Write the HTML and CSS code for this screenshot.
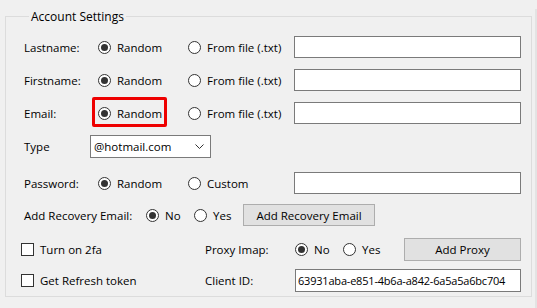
FILE: index.html
```html
<!DOCTYPE html>
<html>
<head>
<meta charset="utf-8">
<link rel="stylesheet" href="styles.css">
</head>
<body>
<div class="window">
  <fieldset class="group">
    <legend class="group-title">Account Settings</legend>

    <div class="row row-1">
      <span class="label w-label">Lastname:</span>
      <span class="opt w-opt-a"><i class="radio on"></i>Random</span>
      <span class="opt w-opt-b"><i class="radio"></i>From file (.txt)</span>
      <span class="textbox w-text"></span>
    </div>

    <div class="row row-2">
      <span class="label w-label">Firstname:</span>
      <span class="opt w-opt-a"><i class="radio on"></i>Random</span>
      <span class="opt w-opt-b"><i class="radio"></i>From file (.txt)</span>
      <span class="textbox w-text"></span>
    </div>

    <div class="row row-3">
      <span class="label w-label">Email:</span>
      <span class="opt w-opt-a highlighted"><i class="radio on"></i>Random<span class="highlight"></span></span>
      <span class="opt w-opt-b"><i class="radio"></i>From file (.txt)</span>
      <span class="textbox w-text"></span>
    </div>

    <div class="row row-4">
      <span class="label w-type">Type</span>
      <span class="combo">@hotmail.com
        <svg class="chevron" width="9" height="5" viewBox="0 0 9 5"><path d="M0.5 0.5 L4.5 4.5 L8.5 0.5" fill="none" stroke="#333" stroke-width="1"/></svg>
      </span>
    </div>

    <div class="row row-5">
      <span class="label w-label">Password:</span>
      <span class="opt w-opt-a"><i class="radio on"></i>Random</span>
      <span class="opt w-opt-b"><i class="radio"></i>Custom</span>
      <span class="textbox w-text"></span>
    </div>

    <div class="row row-6">
      <span class="label w-recovery">Add Recovery Email:</span>
      <span class="opt w-no"><i class="radio on"></i>No</span>
      <span class="opt w-yes"><i class="radio"></i>Yes</span>
      <span class="button w-recovery-btn">Add Recovery Email</span>
    </div>

    <div class="row row-7">
      <span class="opt w-check"><i class="checkbox"></i>Turn on 2fa</span>
      <span class="label w-mid">Proxy Imap:</span>
      <span class="opt w-no2"><i class="radio on"></i>No</span>
      <span class="opt w-yes2"><i class="radio"></i>Yes</span>
      <span class="button w-proxy-btn">Add Proxy</span>
    </div>

    <div class="row row-8">
      <span class="opt w-check"><i class="checkbox"></i>Get Refresh token</span>
      <span class="label w-mid">Client ID:</span>
      <span class="textbox w-client"><span class="client-id">63931aba-e851-4b6a-a842-6a5a5a6bc704</span></span>
    </div>
  </fieldset>
</div>
</body>
</html>
```

FILE: styles.css
```css
html, body {
  margin: 0;
  padding: 0;
  background: #f0f0f0;
}

body {
  font-family: "Open Sans", "Noto Sans", "DejaVu Sans", sans-serif;
  font-size: 11.5px;
  color: #000;
  width: 537px;
  height: 308px;
  overflow: hidden;
}

.window {
  width: 535px;
  height: 308px;
  border-right: 2px solid #e3e3e3;
}

.group {
  box-sizing: border-box;
  width: 527px;
  margin: 9px 0 0 5px;
  padding: 0 10px 3px 18px;
  border: 1px solid #dcdcdc;
  height: 288px;
}

.group-title {
  padding: 0 2px;
  margin-left: 5px;
  line-height: 15px;
  font-size: 12px;
}

.row {
  display: flex;
  align-items: center;
  height: 22px;
}

.row-1 { margin-top: 12px; }
.row-2 { margin-top: 11px; }
.row-3 { margin-top: 11px; }
.row-4 { margin-top: 11px; }
.row-5 { margin-top: 15px; }
.row-6 { margin-top: 10px; }
.row-7 { margin-top: 12px; height: 23px; }
.row-8 { margin-top: 8px; height: 23px; }

.label, .opt {
  flex: none;
  white-space: nowrap;
  display: flex;
  align-items: center;
}

.w-label { width: 74px; }
.w-type { width: 66px; }
.w-recovery { width: 122px; }
.w-opt-a { width: 90px; }
.w-opt-b { width: 106px; }
.w-no { width: 48px; }
.w-yes { width: 49px; }
.w-check { width: 184px; margin-left: -3px; }
.w-mid { width: 90px; }
.w-no2 { width: 48px; }
.w-yes2 { width: 61px; }

.radio {
  box-sizing: border-box;
  width: 13px;
  height: 13px;
  border: 1px solid #333;
  border-radius: 50%;
  background: #fff;
  margin-right: 6px;
  display: flex;
  align-items: center;
  justify-content: center;
  flex: none;
}

.radio.on::after {
  content: "";
  width: 7px;
  height: 7px;
  border-radius: 50%;
  background: #333;
}

.checkbox {
  box-sizing: border-box;
  width: 13px;
  height: 13px;
  border: 1px solid #333;
  background: #fff;
  margin-right: 6px;
  flex: none;
}

.textbox {
  box-sizing: border-box;
  height: 100%;
  border: 1px solid #7a7a7a;
  background: #fff;
  display: flex;
  align-items: center;
  padding-left: 2px;
  white-space: nowrap;
  overflow: hidden;
}

.client-id {
  font-size: 11px;
  letter-spacing: -0.2px;
}

.w-text { width: 227px; }
.w-client { width: 226px; }

.combo {
  box-sizing: border-box;
  width: 121px;
  height: 23px;
  border: 1px solid #7a7a7a;
  background: #fff;
  display: flex;
  align-items: center;
  padding-left: 3px;
  position: relative;
}

.chevron {
  position: absolute;
  right: 6px;
  top: 8px;
}

.button {
  box-sizing: border-box;
  height: 100%;
  background: #e1e1e1;
  border: 1px solid #adadad;
  display: flex;
  align-items: center;
  justify-content: center;
  white-space: nowrap;
}

.w-recovery-btn { width: 132px; }
.w-proxy-btn { width: 117px; }

.highlighted { position: relative; }

.highlight {
  position: absolute;
  left: -6px;
  top: -9px;
  width: 75px;
  height: 30px;
  box-sizing: border-box;
  border: 3px solid #ee0000;
  border-radius: 2px;
}
```
